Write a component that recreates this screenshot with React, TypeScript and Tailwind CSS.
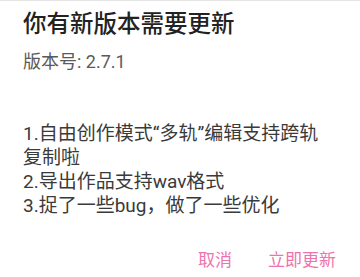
import React from "react";

export default function App() {
  const font = { fontFamily: "Roboto, 'Noto Sans CJK SC', sans-serif" };
  return (
    <div
      className="w-[360px] h-[277px] bg-white border-t-[1.5px] border-[#e6e6e6] overflow-hidden"
      style={font}
    >
      <div className="pl-[23px] pr-[24px] pt-[9px]">
        <div className="text-[23.5px] leading-[28px] font-medium text-[#222222]">
          你有新版本需要更新
        </div>
        <div className="mt-[12px] text-[18px] leading-[24px] text-[#5a5a5a]">
          版本号: 2.7.1
        </div>
        <div className="mt-[48px] text-[19px] leading-[24px] text-[#3a3a3a]">
          <div>1.自由创作模式“多轨”编辑支持跨轨复制啦</div>
          <div>2.导出作品支持wav格式</div>
          <div>3.捉了一些bug，做了一些优化</div>
        </div>
        <div className="mt-[30px] flex justify-end gap-[36px] text-[17px] leading-[24px] text-[#ee72ad]">
          <span>取消</span>
          <span>立即更新</span>
        </div>
      </div>
    </div>
  );
}
